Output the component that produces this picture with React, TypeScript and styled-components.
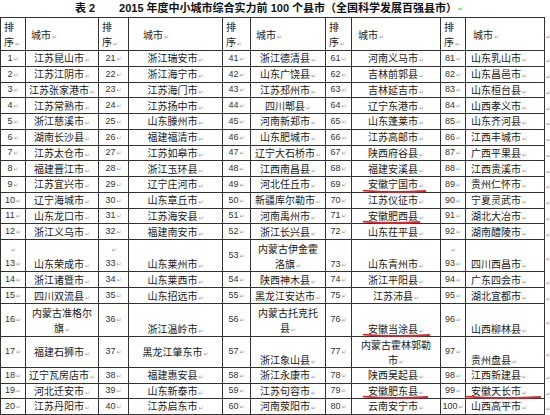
import React from 'react';
import styled, { createGlobalStyle } from 'styled-components';

const GlobalStyle = createGlobalStyle`
  html, body {
    margin: 0;
    padding: 0;
    background: #ffffff;
  }
  body {
    font-family: 'Liberation Sans', 'Noto Sans CJK SC', sans-serif;
    color: #1f1f1f;
  }
`;

// column widths: rank / city, five times, plus the end-of-row mark
const colWidths = [25, 73, 30, 94, 28, 75, 26, 89, 25, 79, 6];
const headIndent = [5, 14, 5, 6, 7];

type Entry = {
  n: string;
  city: string;
  nBreak?: boolean; // empty paragraph above the number
  nV?: 'middle' | 'bottom';
  cV?: 'middle' | 'bottom';
  red?: number; // red hand underline, value = extra reach on the right
};

const e = (n: string, city: string, o: Partial<Entry> = {}): Entry => ({ n, city, ...o });

const rows: Entry[][] = [
  [e('1', '江苏昆山市'), e('21', '浙江瑞安市'), e('41', '浙江德清县'), e('61', '河南义马市'), e('81', '山东乳山市')],
  [e('2', '江苏江阴市'), e('22', '浙江海宁市'), e('42', '山东广饶县'), e('62', '吉林前郭县'), e('82', '山东昌邑市')],
  [e('3', '江苏张家港市'), e('23', '江苏海门市'), e('43', '江苏邳州市'), e('63', '吉林延吉市'), e('83', '山东桓台县')],
  [e('4', '江苏常熟市'), e('24', '江苏扬中市'), e('44', '四川郫县'), e('64', '辽宁东港市'), e('84', '山西孝义市')],
  [e('5', '浙江慈溪市'), e('25', '山东滕州市'), e('45', '河南新郑市'), e('65', '山东蓬莱市'), e('85', '山东齐河县')],
  [e('6', '湖南长沙县'), e('26', '福建福清市'), e('46', '山东肥城市'), e('66', '江苏高邮市'), e('86', '江西丰城市')],
  [e('7', '江苏太仓市'), e('27', '江苏如皋市'), e('47', '辽宁大石桥市'), e('67', '陕西府谷县'), e('87', '广西平果县')],
  [e('8', '福建晋江市'), e('28', '浙江玉环县'), e('48', '江西南昌县'), e('68', '福建安溪县'), e('88', '江西贵溪市')],
  [e('9', '江苏宜兴市'), e('29', '辽宁庄河市'), e('49', '河北任丘市'), e('69', '安徽宁国市', { red: 2 }), e('89', '贵州仁怀市')],
  [e('10', '辽宁海城市'), e('30', '山东章丘市'), e('50', '新疆库尔勒市'), e('70', '江苏仪征市'), e('90', '宁夏灵武市')],
  [e('11', '山东龙口市'), e('31', '江苏海安县'), e('51', '河南禹州市'), e('71', '安徽肥西县', { red: -4 }), e('91', '湖北大冶市')],
  [e('12', '浙江义乌市'), e('32', '福建南安市'), e('52', '浙江长兴县'), e('72', '山东茌平县'), e('92', '湖南醴陵市')],
  [
    e('13', '山东荣成市', { nBreak: true, cV: 'bottom' }),
    e('33', '山东莱州市', { nBreak: true, cV: 'bottom' }),
    e('53', '内蒙古伊金霍\n洛旗'),
    e('73', '山东青州市', { nV: 'bottom', cV: 'bottom' }),
    e('93', '四川西昌市', { nBreak: true, cV: 'bottom' }),
  ],
  [e('14', '浙江诸暨市'), e('34', '山东莱西市'), e('54', '陕西神木县'), e('74', '浙江平阳县'), e('94', '广东四会市')],
  [e('15', '四川双流县'), e('35', '山东招远市'), e('55', '黑龙江安达市'), e('75', '江苏沛县'), e('95', '湖北宜都市')],
  [
    e('16', '内蒙古准格尔\n旗'),
    e('36', '浙江温岭市', { cV: 'bottom' }),
    e('56', '内蒙古托克托\n县'),
    e('76', '安徽当涂县', { cV: 'bottom', red: 6 }),
    e('96', '山西柳林县', { cV: 'bottom' }),
  ],
  [
    e('17', '福建石狮市'),
    e('37', '黑龙江肇东市'),
    e('57', '浙江象山县', { cV: 'bottom' }),
    e('77', '内蒙古霍林郭勒\n市'),
    e('97', '贵州盘县', { cV: 'bottom' }),
  ],
  [e('18', '辽宁瓦房店市'), e('38', '福建惠安县'), e('58', '浙江永康市'), e('78', '陕西吴起县'), e('98', '江西新建县')],
  [e('19', '河北迁安市'), e('39', '山东新泰市'), e('59', '江苏句容市'), e('79', '安徽肥东县', { red: 4 }), e('99', '安徽天长市', { red: 14 })],
  [e('20', '江苏丹阳市'), e('40', '江苏启东市'), e('60', '河南荥阳市'), e('80', '云南安宁市'), e('100', '山西高平市')],
];

const rowHeights = [
  15.75, 15.75, 15.75, 15.75, 15.75, 15.75, 15.75, 15.75, 15.75, 15.75, 15.75, 15.75,
  32, 16, 16, 32.5, 31.5, 15.5, 15.5, 15.5,
];

const Page = styled.div`
  width: 550px;
  height: 415px;
  overflow: hidden;
  background: #ffffff;
`;

const Caption = styled.div`
  width: 538px;
  height: 17px;
  display: flex;
  justify-content: center;
  align-items: center;
  font-size: 11px;
  font-weight: 700;
  line-height: 17px;
  color: #111111;
  white-space: nowrap;
`;

const CaptionLabel = styled.span`
  margin-right: 24px;
`;

const Grid = styled.table`
  border-collapse: collapse;
  table-layout: fixed;
  width: 550px;
`;

const Row = styled.tr<{ $h: number }>`
  height: ${(p) => p.$h}px;
`;

const HeadRank = styled.th`
  border: 1px solid #333333;
  padding: 0 0 0 3px;
  text-align: left;
  vertical-align: middle;
  font-family: 'Noto Sans CJK SC', sans-serif;
  font-weight: 400;
  font-size: 10px;
  line-height: 15px;
  color: #222222;
`;

const HeadCity = styled.th<{ $indent: number }>`
  border: 1px solid #333333;
  padding: 0 0 0 ${(p) => p.$indent}px;
  text-align: left;
  vertical-align: middle;
  font-family: 'Noto Sans CJK SC', sans-serif;
  font-weight: 400;
  font-size: 10px;
  line-height: 15px;
  color: #222222;
`;

const RankCell = styled.td<{ $v: string }>`
  border: 1px solid #333333;
  padding: 0;
  text-align: center;
  vertical-align: ${(p) => p.$v};
  font-family: 'Liberation Sans', sans-serif;
  font-size: 9px;
  line-height: 13px;
  color: #333333;
  white-space: nowrap;
  overflow: visible;
`;

const CityCell = styled.td<{ $v: string; $left?: boolean }>`
  border: 1px solid #333333;
  padding: ${(p) => (p.$left ? '0 0 0 5px' : '0 2px')};
  text-align: ${(p) => (p.$left ? 'left' : 'center')};
  vertical-align: ${(p) => p.$v};
  font-family: 'Noto Sans CJK SC', sans-serif;
  font-size: 10px;
  line-height: 14px;
  color: #181818;
  white-space: nowrap;
  overflow: visible;
`;

// one written line inside a cell
const Line = styled.div<{ $h?: number }>`
  height: ${(p) => p.$h ?? 15}px;
  line-height: ${(p) => p.$h ?? 15}px;
`;

const EndCell = styled.td`
  border: none;
  padding: 0;
  vertical-align: middle;
  line-height: 10px;
`;

const Ret = styled.span`
  font-family: 'DejaVu Sans', sans-serif;
  font-size: 6px;
  line-height: 0;
  color: #9a9a9a;
  margin-left: 1px;
`;

const Marked = styled.span`
  position: relative;
`;

const Ink = styled.svg<{ $reach: number }>`
  position: absolute;
  left: -5px;
  bottom: -2.5px;
  width: calc(100% + ${(p) => 5 + p.$reach}px);
  height: 5px;
  overflow: visible;
  pointer-events: none;
`;

const Underline = ({ reach }: { reach: number }) => (
  <Ink $reach={reach} viewBox="0 0 100 5" preserveAspectRatio="none">
    <path
      d="M1 1.6 Q 45 4 99 2"
      fill="none"
      stroke="#e3262e"
      strokeWidth={1.8}
      strokeLinecap="round"
      vectorEffect="non-scaling-stroke"
    />
  </Ink>
);

const CityText = ({ entry }: { entry: Entry }) => {
  const lines = entry.city.split('\n');
  if (lines.length > 1) {
    return (
      <>
        {lines.map((l, i) => (
          <Line key={i}>
            {l}
            {i === lines.length - 1 && <Ret>↵</Ret>}
          </Line>
        ))}
      </>
    );
  }
  const body = (
    <>
      {entry.city}
      <Ret>↵</Ret>
    </>
  );
  if (entry.red === undefined) return body;
  return (
    <Marked>
      {body}
      <Underline reach={entry.red} />
    </Marked>
  );
};

export default function App() {
  return (
    <Page>
      <GlobalStyle />
      <Caption>
        <CaptionLabel>表 2</CaptionLabel>
        2015 年度中小城市综合实力前 100 个县市（全国科学发展百强县市）
        <Ret>↵</Ret>
      </Caption>
      <Grid>
        <colgroup>
          {colWidths.map((w, i) => (
            <col key={i} style={{ width: w }} />
          ))}
        </colgroup>
        <tbody>
          <Row $h={33}>
            {headIndent.map((ind, i) => (
              <React.Fragment key={i}>
                <HeadRank>
                  <Line>排</Line>
                  <Line>
                    序<Ret>↵</Ret>
                  </Line>
                </HeadRank>
                <HeadCity $indent={ind}>
                  城市<Ret>↵</Ret>
                </HeadCity>
              </React.Fragment>
            ))}
            <EndCell>
              <Ret>↵</Ret>
            </EndCell>
          </Row>
          {rows.map((row, r) => (
            <Row key={r} $h={rowHeights[r]}>
              {row.map((entry, i) => (
                <React.Fragment key={i}>
                  <RankCell $v={entry.nV ?? 'middle'}>
                    {entry.nBreak ? (
                      <>
                        <Line $h={14}>
                          <Ret>↵</Ret>
                        </Line>
                        <Line $h={14}>
                          {entry.n}
                          <Ret>↵</Ret>
                        </Line>
                      </>
                    ) : (
                      <>
                        {entry.n}
                        <Ret>↵</Ret>
                      </>
                    )}
                  </RankCell>
                  <CityCell $v={entry.cV ?? 'middle'} $left={i === 4}>
                    <CityText entry={entry} />
                  </CityCell>
                </React.Fragment>
              ))}
              <EndCell>
                <Ret>↵</Ret>
              </EndCell>
            </Row>
          ))}
        </tbody>
      </Grid>
    </Page>
  );
}
